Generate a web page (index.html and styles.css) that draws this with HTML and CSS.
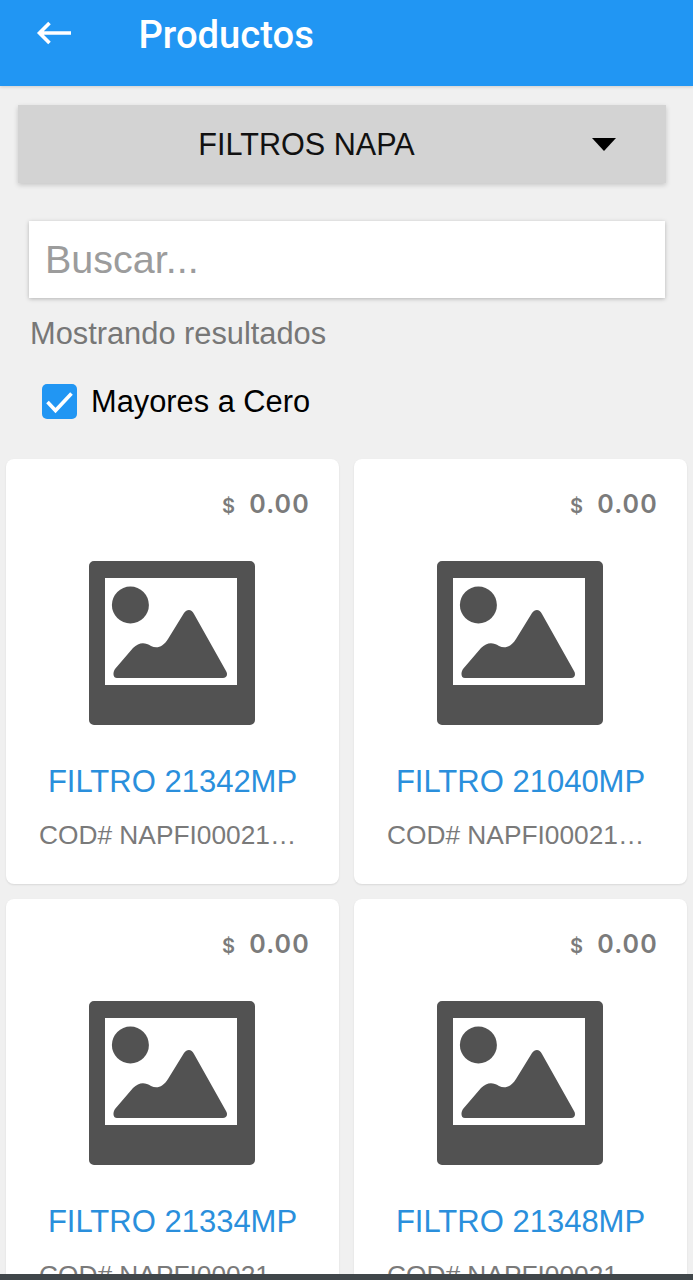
FILE: index.html

```html
<!DOCTYPE html>
<html lang="es">
<head>
  <meta charset="UTF-8">
  <meta name="viewport" content="width=device-width, initial-scale=1.0">
  <title>Productos</title>
  <link rel="stylesheet" href="styles.css">
</head>
<body>
  <header class="topbar">
    <svg class="back" viewBox="0 0 36 26" width="36" height="26" aria-hidden="true">
      <path d="M35 13H4M13.500 3L3.500 13l10 10" fill="none" stroke="#fff" stroke-width="3.600"/>
    </svg>
    <h1>Productos</h1>
  </header>

  <div class="select">
    <span class="select-label">FILTROS NAPA</span>
    <span class="select-arrow"></span>
  </div>

  <div class="search">Buscar...</div>
  <p class="results">Mostrando resultados</p>

  <div class="check-row">
    <span class="checkbox">
      <svg viewBox="0 0 35 35" width="35" height="35" aria-hidden="true">
        <path d="M5.500 18l8 8.500L29.500 9.500" fill="none" stroke="#fff" stroke-width="3.600"/>
      </svg>
    </span>
    <span>Mayores a Cero</span>
  </div>

  <div class="products">
    <div class="card">
      <div class="price"><span class="cur">$</span>0.00</div>
      <svg class="pic" viewBox="0 0 166 164" aria-hidden="true"><use href="#noimage"/></svg>
      <div class="name">FILTRO 21342MP</div>
      <div class="code">COD# NAPFI00021342MP</div>
    </div>
    <div class="card">
      <div class="price"><span class="cur">$</span>0.00</div>
      <svg class="pic" viewBox="0 0 166 164" aria-hidden="true"><use href="#noimage"/></svg>
      <div class="name">FILTRO 21040MP</div>
      <div class="code">COD# NAPFI00021040MP</div>
    </div>
    <div class="card">
      <div class="price"><span class="cur">$</span>0.00</div>
      <svg class="pic" viewBox="0 0 166 164" aria-hidden="true"><use href="#noimage"/></svg>
      <div class="name">FILTRO 21334MP</div>
      <div class="code">COD# NAPFI00021334MP</div>
    </div>
    <div class="card">
      <div class="price"><span class="cur">$</span>0.00</div>
      <svg class="pic" viewBox="0 0 166 164" aria-hidden="true"><use href="#noimage"/></svg>
      <div class="name">FILTRO 21348MP</div>
      <div class="code">COD# NAPFI00021348MP</div>
    </div>
  </div>

  <div class="bottom-edge"></div>

  <svg class="defs" width="0" height="0" aria-hidden="true">
    <symbol id="noimage" viewBox="0 0 166 164">
      <path fill="#525252" fill-rule="evenodd" d="M5 0H161a5 5 0 0 1 5 5V159a5 5 0 0 1-5 5H5a5 5 0 0 1-5-5V5a5 5 0 0 1 5-5ZM16 17V124H148V17Z"/>
      <circle cx="41.400" cy="44" r="18.500" fill="#525252"/>
      <path fill="#525252" d="M28 117H134C138 117 139 113 137 110L105 53C102.500 48 98 48 95 52L79 78C74 86 68 88 62 85C56 81 50 81 44 87L26 108C23.500 112 24 117 28 117Z"/>
    </symbol>
  </svg>
</body>
</html>
```

FILE: styles.css

```css
body {
  font-family: "Liberation Sans", Arial, sans-serif;
  background-color: #f0f0f0;
  margin: 0;
  height: 1280px;
  overflow: hidden;
}
.topbar {
  background-color: #2196f3;
  height: 86px;
  display: flex;
  align-items: flex-start;
  padding-left: 36px;
  box-shadow: 0 1px 3px rgba(0, 0, 0, 0.15);
}
.back {
  margin-top: 20px;
}
.topbar h1 {
  color: #fff;
  font-family: Roboto, sans-serif;
  font-size: 38.200px;
  font-weight: 500;
  line-height: 42px;
  margin: 14px 0 0 66.500px;
}
.select {
  background-color: #d3d3d3;
  height: 78px;
  margin: 19px 27px 0 18px;
  display: flex;
  align-items: center;
  padding: 0 50px 0 0;
  box-shadow: 0 2px 5px rgba(0, 0, 0, 0.18);
}
.select-label {
  flex: 1;
  text-align: center;
  font-size: 30.600px;
  line-height: 36px;
  color: #111;
  padding-left: 29px;
  margin-right: 26px;
}
.select-arrow {
  width: 0;
  height: 0;
  border-left: 12px solid transparent;
  border-right: 12px solid transparent;
  border-top: 13px solid #000;
}
.search {
  background-color: #fff;
  height: 77px;
  line-height: 77px;
  margin: 38px 28px 0 29px;
  padding-left: 16px;
  font-size: 39.500px;
  color: #9c9c9c;
  box-shadow: 0 1px 4px rgba(0, 0, 0, 0.25);
}
.results {
  margin: 18px 0 0 30px;
  font-size: 30.800px;
  line-height: 36px;
  color: #777;
}
.check-row {
  display: flex;
  align-items: center;
  margin: 32px 0 0 42px;
  font-size: 30.800px;
  line-height: 35px;
  color: #000;
  gap: 14px;
}
.checkbox {
  width: 35px;
  height: 35px;
  border-radius: 5px;
  background-color: #2196f3;
  display: block;
}
.checkbox svg {
  display: block;
}
.products {
  display: grid;
  grid-template-columns: 333px 333px;
  gap: 15px;
  padding: 0 6px;
  margin-top: 40px;
}
.card {
  background-color: #fff;
  border-radius: 8px;
  height: 425px;
  box-sizing: border-box;
  padding: 29px 33px 0;
  box-shadow: 0 1px 2px rgba(0, 0, 0, 0.1);
}
.price {
  font-family: Inter, sans-serif;
  font-size: 25px;
  font-weight: 600;
  line-height: 32px;
  color: #7b7b7b;
  text-align: right;
  letter-spacing: 1.200px;
  margin-right: -4px;
}
.cur {
  font-size: 20px;
  margin-right: 13px;
}
.pic {
  display: block;
  width: 166px;
  height: 164px;
  margin: 38.500px 0 0 50.300px;
}
.name {
  color: #2a8fdc;
  font-size: 31px;
  line-height: 36px;
  text-align: center;
  margin-top: 39.500px;
  white-space: nowrap;
}
.code {
  color: #7a7a7a;
  font-size: 26.300px;
  line-height: 32px;
  margin-top: 19px;
  margin-right: 8px;
  white-space: nowrap;
  overflow: hidden;
  text-overflow: ellipsis;
}
.bottom-edge {
  position: fixed;
  left: 0;
  right: 0;
  bottom: 0;
  height: 6px;
  background-color: #40464a;
}
.defs {
  position: absolute;
}
```
